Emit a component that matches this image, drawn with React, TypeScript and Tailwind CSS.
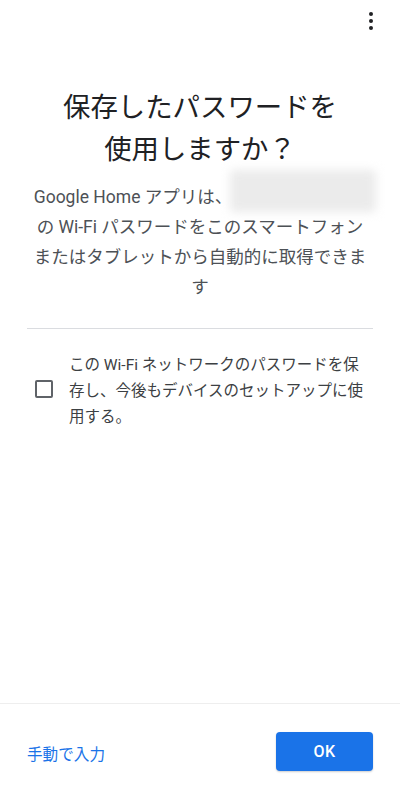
const App = () => {
  return (
    <div className="h-[789px] w-[400px] flex flex-col bg-white font-[family-name:Roboto,'Noto_Sans_CJK_JP',sans-serif]">
      {/* top bar */}
      <div className="h-[44px] flex justify-end items-start pt-[12px] pr-[27px]">
        <div className="flex flex-col items-center gap-[3px]">
          <span className="w-[4px] h-[4px] rounded-full bg-[#202124]" />
          <span className="w-[4px] h-[4px] rounded-full bg-[#202124]" />
          <span className="w-[4px] h-[4px] rounded-full bg-[#202124]" />
        </div>
      </div>

      <main className="flex-1 flex flex-col">
        <h1 className="mt-[43px] text-center text-[27.4px] leading-[42px] text-[#202124] font-normal">
          保存したパスワードを
          <br />
          使用しますか？
        </h1>

        <div className="mt-[11px] text-center text-[17.5px] leading-[30px] text-[#4d5156]">
          <div className="whitespace-nowrap">
            Google Home アプリは、
            <span className="relative inline-block w-[134px] h-[30px] align-top">
              <span className="absolute left-[-2px] right-[-10px] top-[-12px] bottom-0 bg-[#ebebeb] blur-[5px] rounded" />
            </span>
          </div>
          <div className="whitespace-nowrap">の Wi-Fi パスワードをこのスマートフォン</div>
          <div className="whitespace-nowrap">またはタブレットから自動的に取得できま</div>
          <div>す</div>
        </div>

        <div className="mt-[26px] mx-[27px] h-px bg-[#dadce0]" />

        <label className="mt-[23px] flex items-center pl-[35px] pr-[20px] gap-[16px]">
          <span className="w-[18px] h-[18px] shrink-0 border-2 border-[#5f6368] rounded-[2px] -mt-[5px]" />
          <span className="text-[15.5px] leading-[26px] text-[#3c4043]">
            <span className="block whitespace-nowrap">この Wi-Fi ネットワークのパスワードを保</span>
            <span className="block whitespace-nowrap">存し、今後もデバイスのセットアップに使</span>
            <span className="block">用する。</span>
          </span>
        </label>
      </main>

      <footer className="h-[86px] border-t border-[#eeeeee] flex items-start justify-between px-[27px] pt-[28px]">
        <button className="mt-[9px] text-[15.6px] leading-[28px] text-[#1a73e8]">手動で入力</button>
        <button className="w-[97px] h-[39px] rounded-[4px] bg-[#1a73e8] text-white text-[16px] font-medium tracking-[0.5px] shadow-[0_1px_2px_rgba(0,0,0,0.2)]">
          OK
        </button>
      </footer>
    </div>
  );
};

export default App;
